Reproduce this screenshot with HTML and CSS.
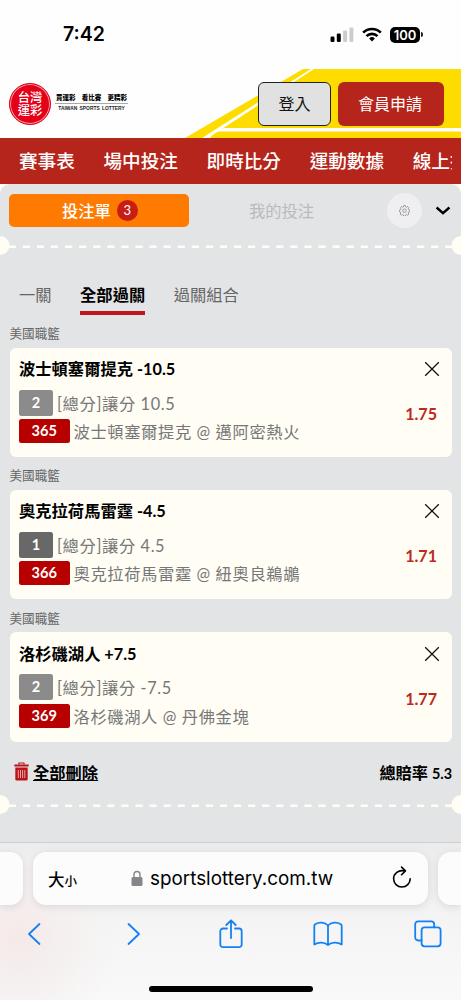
FILE: index.html
```
<!DOCTYPE html>
<html lang="zh-Hant">
<head>
<meta charset="utf-8">
<meta name="viewport" content="width=device-width">
<title>台灣運彩</title>
<link rel="stylesheet" href="styles.css">
</head>
<body>
<div class="screen">
  <header class="status">
    <span class="clock">7:42</span>
    <div class="indicators">
      <svg width="24" height="16" viewBox="0 0 24 16"><rect x="0.5" y="9.5" width="4" height="5.5" rx="1.2"/><rect x="6.8" y="6.5" width="4" height="8.5" rx="1.2"/><rect x="13.1" y="3.5" width="4" height="11.5" rx="1.2" fill="#ccc"/><rect x="19.4" y="0.5" width="4" height="14.5" rx="1.2" fill="#ccc"/></svg>
      <svg class="wifi" width="20" height="16" viewBox="0 0 20 16" fill="none" stroke="#000" stroke-width="2.7"><path d="M1.2 5.6a12.6 12.6 0 0 1 17.6 0"/><path d="M4.5 9.1a7.9 7.9 0 0 1 11 0"/><path d="M7.1 11.5a4.2 4.2 0 0 1 5.8 0L10 14.5z" fill="#000" stroke="none"/></svg>
      <span class="battery">100</span>
      <span class="battery-tip"></span>
    </div>
  </header>

  <div class="masthead">
    <svg class="stripes" width="461" height="69" viewBox="0 0 461 69"><path d="M185 69 303 0H461V69z" fill="#ffdc00"/><path d="M311 0 202 69H208L314 0z" fill="#fff"/><path d="M217 62 224 59H461V62.5H215L210 69H203z" fill="#fff"/></svg>
    <div class="brand">
      <div class="seal"><span>台灣</span><span>運彩</span></div>
      <div class="slogan"><div class="zh"><span>買運彩</span><span>看比賽</span><span>更精彩</span></div><div class="en">TAIWAN SPORTS LOTTERY</div></div>
    </div>
    <div class="account"><button class="login">登入</button><button class="join">會員申請</button></div>
  </div>

  <nav class="nav"><div class="nav-items"><span>賽事表</span><span>場中投注</span><span>即時比分</span><span>運動數據</span><span>線上投注</span></div></nav>

  <main class="slip-wrap">
    <div class="slip">
      <div class="tabs">
        <div class="tab-on">投注單<b>3</b></div>
        <div class="tab-off">我的投注</div>
        <div class="gear"><svg width="11" height="11" viewBox="0 0 20 20" fill="none" stroke="#858585" stroke-width="1.4"><path d="M8.500 1h3l.6 2.300 1.700.7 2-1.200 2.100 2.100-1.200 2 .7 1.700 2.300.6v3l-2.300.6-.7 1.700 1.200 2-2.100 2.100-2-1.200-1.700.7-.6 2.300h-3l-.6-2.300-1.700-.7-2 1.200-2.100-2.100 1.200-2-.7-1.700L.6 12.200v-3l2.300-.6.7-1.700-1.200-2 2.100-2.100 2 1.200 1.700-.7z"/><circle cx="10" cy="10.500" r="3.200"/></svg></div>
        <svg class="chev" width="16" height="10" viewBox="0 0 16 10" fill="none" stroke="#000" stroke-width="2.4"><path d="M1.6 1.5 8 7.2l6.4-5.7"/></svg>
      </div>
      <svg class="perforation" width="461" height="20" viewBox="0 0 461 20"><circle cx="0" cy="9.5" r="9.5"/><circle cx="461" cy="9.5" r="9.5"/><path d="M8.7 10.8H453"/></svg>
      <div class="modes"><span>一關</span><span class="active">全部過關</span><span>過關組合</span></div>

      <section class="bet">
        <div class="league">美國職籃</div>
        <div class="card">
          <div class="title">波士頓塞爾提克 -10.5</div>
          <div class="line one"><span class="pick">2</span><span>[總分]讓分 10.5</span></div>
          <div class="line"><span class="code">365</span><span>波士頓塞爾提克 @ 邁阿密熱火</span></div>
          <svg class="close" width="16" height="16" viewBox="0 0 16 16"><path d="M1.2 1.2 14.8 14.8M14.8 1.2 1.2 14.8"/></svg>
          <span class="odds">1.75</span>
        </div>
      </section>
      <section class="bet">
        <div class="league">美國職籃</div>
        <div class="card">
          <div class="title">奧克拉荷馬雷霆 -4.5</div>
          <div class="line one"><span class="pick dark">1</span><span>[總分]讓分 4.5</span></div>
          <div class="line"><span class="code">366</span><span>奧克拉荷馬雷霆 @ 紐奧良鵜鶘</span></div>
          <svg class="close" width="16" height="16" viewBox="0 0 16 16"><path d="M1.2 1.2 14.8 14.8M14.8 1.2 1.2 14.8"/></svg>
          <span class="odds">1.71</span>
        </div>
      </section>
      <section class="bet">
        <div class="league">美國職籃</div>
        <div class="card">
          <div class="title">洛杉磯湖人 +7.5</div>
          <div class="line one"><span class="pick">2</span><span>[總分]讓分 -7.5</span></div>
          <div class="line"><span class="code">369</span><span>洛杉磯湖人 @ 丹佛金塊</span></div>
          <svg class="close" width="16" height="16" viewBox="0 0 16 16"><path d="M1.2 1.2 14.8 14.8M14.8 1.2 1.2 14.8"/></svg>
          <span class="odds">1.77</span>
        </div>
      </section>

      <div class="summary">
        <svg width="15" height="19" viewBox="0 0 15 19" fill="none"><path d="M5 2.6V1h5v1.6" stroke="#b9141a" stroke-width="1.2"/><path d="M0.3 2.4h14.4v2H0.3zM1.3 5.4h12.4v11.8a1.3 1.3 0 0 1-1.3 1.3H2.6a1.3 1.3 0 0 1-1.3-1.3z" fill="#b9141a"/><path d="M4.3 8v8M6.5 8v8M8.6 8v8M10.8 8v8" stroke="#e9b5b5" stroke-width="0.9"/></svg>
        <a class="clear">全部刪除</a>
        <span class="total">總賠率 <small>5.3</small></span>
      </div>
      <svg class="perforation" width="461" height="20" viewBox="0 0 461 20"><circle cx="0" cy="9.5" r="9.5"/><circle cx="461" cy="9.5" r="9.5"/><path d="M8.7 10.8H453"/></svg>
    </div>
  </main>

  <footer class="browser">
    <div class="address-row">
      <div class="side left"></div>
      <div class="address">
        <span class="size">大<small>小</small></span>
        <span class="url"><svg width="12" height="17" viewBox="0 0 12 17"><path d="M3 8V4.5a3 3 0 0 1 6 0V8" fill="none" stroke="#85858a" stroke-width="1.4"/><rect x="0.5" y="7" width="11" height="9" rx="1.5" fill="#85858a"/></svg>sportslottery.com.tw</span>
        <svg class="reload" width="20" height="24" viewBox="0 0 20 24" fill="none" stroke="#000" stroke-width="1.6" stroke-linecap="round" stroke-linejoin="round"><path d="M12.6 4.9C6.5 3.4 1.6 7.7 1.6 12.7a8.3 8.3 0 0 0 16.6 0"/><path d="M9.6 1.1 13.4 4.9 9.6 8.8"/></svg>
      </div>
      <div class="side right"></div>
    </div>
    <div class="tools">
      <svg width="14" height="24" viewBox="0 0 14 24"><path d="M12.5 2 2 12l10.5 10"/></svg>
      <svg width="14" height="24" viewBox="0 0 14 24"><path d="M1.5 2 12 12 1.5 22"/></svg>
      <svg width="24" height="30" viewBox="0 0 24 30"><path d="M8 9.5H4a2.7 2.7 0 0 0-2.7 2.7v13.3A2.7 2.7 0 0 0 4 28.2h16a2.7 2.7 0 0 0 2.7-2.7V12.2A2.7 2.7 0 0 0 20 9.5h-4M12 19V1.5M7.3 6 12 1.3 16.7 6"/></svg>
      <svg width="30" height="26" viewBox="0 0 30 26"><path d="M15 4.5C12 1.2 6 .8 2.2 3.2 1.5 3.7 1.3 4.2 1.3 5v18.5c4-2.7 10-2.7 13.7.5 3.7-3.2 9.7-3.2 13.7-.5V5c0-.8-.2-1.3-.9-1.8C24 .8 18 1.2 15 4.5zM15 4.5V24"/></svg>
      <svg width="28" height="28" viewBox="0 0 28 28"><rect x="7.6" y="7.3" width="19" height="19" rx="3"/><path d="M7.6 20.5H4.2a3 3 0 0 1-3-3V4.3a3 3 0 0 1 3-3h13a3 3 0 0 1 3 3v3"/></svg>
    </div>
    <div class="home"></div>
  </footer>
</div>
</body>
</html>
```
FILE: styles.css
```
* { box-sizing: border-box; }
body { margin: 0; background: #fefefe; font-family: Lato, "Noto Sans CJK TC", sans-serif; white-space: nowrap; }
.screen { width: 461px; height: 1000px; overflow: hidden; display: flex; flex-direction: column; }
svg { display: block; flex: none; }

.status { height: 69px; flex: none; display: flex; justify-content: space-between; padding: 24px 38px 0 63px; font-family: Inter, sans-serif; }
.clock { font-size: 19.5px; line-height: 21px; font-weight: 600; }
.indicators { display: flex; align-items: center; height: 21px; }
.wifi { margin-left: 8px; }
.battery { margin-left: 8.5px; width: 30px; height: 16px; border-radius: 5px; background: #000; color: #fff; font-size: 13px; line-height: 16px; font-weight: 600; text-align: center; }
.battery-tip { width: 2px; height: 5px; margin-left: 1px; border-radius: 0 2px 2px 0; background: #222; }

.masthead { position: relative; height: 69px; flex: none; display: flex; justify-content: space-between; padding: 0 17px 0 9px; }
.stripes { position: absolute; left: 0; top: 0; }
.brand { position: relative; display: flex; padding-top: 14px; }
.seal { width: 42px; height: 42px; border-radius: 50%; background: #e50019; border: 1px solid #e50019; box-shadow: inset 0 0 0 1px #f6a0a5; color: #fff; font-size: 12.3px; line-height: 13px; font-weight: 500; display: flex; flex-direction: column; align-items: center; justify-content: center; }
.slogan { margin: 10px 0 0 4px; width: 73px; }
.zh { display: flex; justify-content: space-between; padding: 0 1px; font-size: 6.5px; line-height: 9px; font-weight: 900; border-bottom: 1px solid #aaa; height: 11px; }
.en { font-family: "Liberation Sans", sans-serif; font-size: 4.9px; line-height: 9px; font-weight: 700; text-align: center; word-spacing: 1px; color: #222; }
.account { position: relative; display: flex; gap: 7px; padding-top: 13px; }
button { font: 16px "Noto Sans CJK TC", sans-serif; border-radius: 6px; padding: 0 0 2px; height: 44px; }
.login { width: 73px; border: 1px solid #222; background: #e1e1e1; color: #111; }
.join { width: 106px; border: 0; background: #b5251b; color: #fff; padding-right: 2px; }

.nav { height: 46px; flex: none; background: #b5251b; padding: 0 9px 0 19px; }
.nav-items { display: flex; gap: 28.7px; overflow: hidden; color: #fff; font-size: 18.6px; line-height: 46px; font-weight: 500; }
.nav-items span { flex: none; }

.slip-wrap { height: 658px; flex: none; background: #fffdf4; }
.slip { height: 658px; background: #e3e4e6; border-radius: 10px 10px 0 0; border-top: 1px solid #eee2e1; }
.tabs { height: 52px; display: flex; align-items: center; padding: 0 10px 2px 9px; }
.tab-on { margin-right: 60px; width: 180px; height: 33px; border-radius: 5px; background: #ff7a00; color: #fff; font-size: 16.3px; font-weight: 500; display: flex; align-items: center; justify-content: center; gap: 6px; padding: 0 3px 0 5px; }
.tab-on b { width: 21px; height: 21px; border-radius: 50%; background: #c71d15; font-size: 13px; font-weight: 400; line-height: 21px; text-align: center; }
.tab-off { color: #b9babc; font-size: 16.3px; }
.gear { margin-left: 73px; width: 35px; height: 35px; border-radius: 50%; background: #efeff2; display: flex; align-items: center; justify-content: center; }
.chev { margin: 2px 0 0 13px; }
.perforation { fill: #fffdf4; stroke: none; margin-top: -1px; }
.perforation path { stroke: #fffdf4; stroke-width: 2.4; stroke-dasharray: 7.2 6.88; }
.modes { display: flex; gap: 28.5px; padding-left: 19px; height: 59px; align-items: flex-end; font-size: 16.3px; color: #666; }
.modes span { height: 34px; line-height: 28px; }
.modes .active { color: #000; font-weight: 700; border-bottom: 4px solid #c0161c; }

.bet { height: 142.4px; padding: 10px 9.5px 0; }
.league { height: 22.6px; line-height: 18.4px; font-size: 12.6px; color: #666; }
.card { position: relative; height: 109.4px; border-radius: 6px; background: #fffdf4; padding: 8.3px 10px 0 9.5px; }
.title { height: 33.7px; font-size: 16.3px; line-height: 26px; font-weight: 700; }
.line { display: flex; align-items: center; gap: 4px; height: 24px; font-size: 16.3px; letter-spacing: .62px; color: #777; }
.one { height: 26px; margin-bottom: 3.5px; }
.pick, .code { height: 24px; border-radius: 2.5px; background: #b70000; color: #fff; font-size: 14.6px; line-height: 24px; font-weight: 700; letter-spacing: 0; text-align: center; width: 50.5px; }
.pick { width: 34px; height: 26px; line-height: 26px; background: #8b8b8b; }
.dark { background: #686868; }
.close { position: absolute; right: 12px; top: 13.3px; stroke: #111; stroke-width: 1.3; }
.odds { position: absolute; right: 14.5px; top: 56.4px; font-size: 16.1px; line-height: 20px; font-weight: 700; color: #bb291f; }

.summary { height: 54px; display: flex; align-items: center; padding: 5px 9px 0 13.5px; font-size: 16.3px; font-weight: 700; }
.clear { margin-left: 4.5px; text-decoration: underline; }
.total { margin-left: auto; font-size: 16.2px; }
.total small { font-size: 14.4px; }

.browser { height: 158px; flex: none; border-top: 1px solid #cfcfd2; background: radial-gradient(circle at 20px 95px, #f5e9e8 0, #f5f0f0 45px, transparent 100px), linear-gradient(#ececed, #f5f5f5 55%, #f9f9f9); padding-top: 9px; }
.address-row { height: 53px; display: flex; gap: 10px; }
.side, .address { background: #fcfcfc; box-shadow: 0 2px 9px rgba(0,0,0,.1); }
.left { width: 23px; border-radius: 0 13px 13px 0; }
.right { flex: 1; border-radius: 13px 0 0 13px; }
.address { width: 395px; border-radius: 13px; display: flex; align-items: center; padding: 0 16px 0 15px; font-family: Inter, "Noto Sans CJK TC", sans-serif; }
.size { width: 83px; font-size: 16.5px; font-weight: 500; }
.size small { font-size: 12.5px; }
.url { display: flex; align-items: center; gap: 7px; font-size: 18.85px; flex: 1; }
.reload { margin-top: -1px; }
.tools { height: 58px; display: grid; grid-template-columns: 68px 131px 63px 132px 67px; justify-items: center; align-items: center; }
.tools svg { fill: none; stroke: #1580f5; stroke-width: 1.8; stroke-linecap: round; stroke-linejoin: round; }
.home { width: 164px; height: 6px; border-radius: 3px; background: #000; margin: 23px auto 0 149px; }
```
